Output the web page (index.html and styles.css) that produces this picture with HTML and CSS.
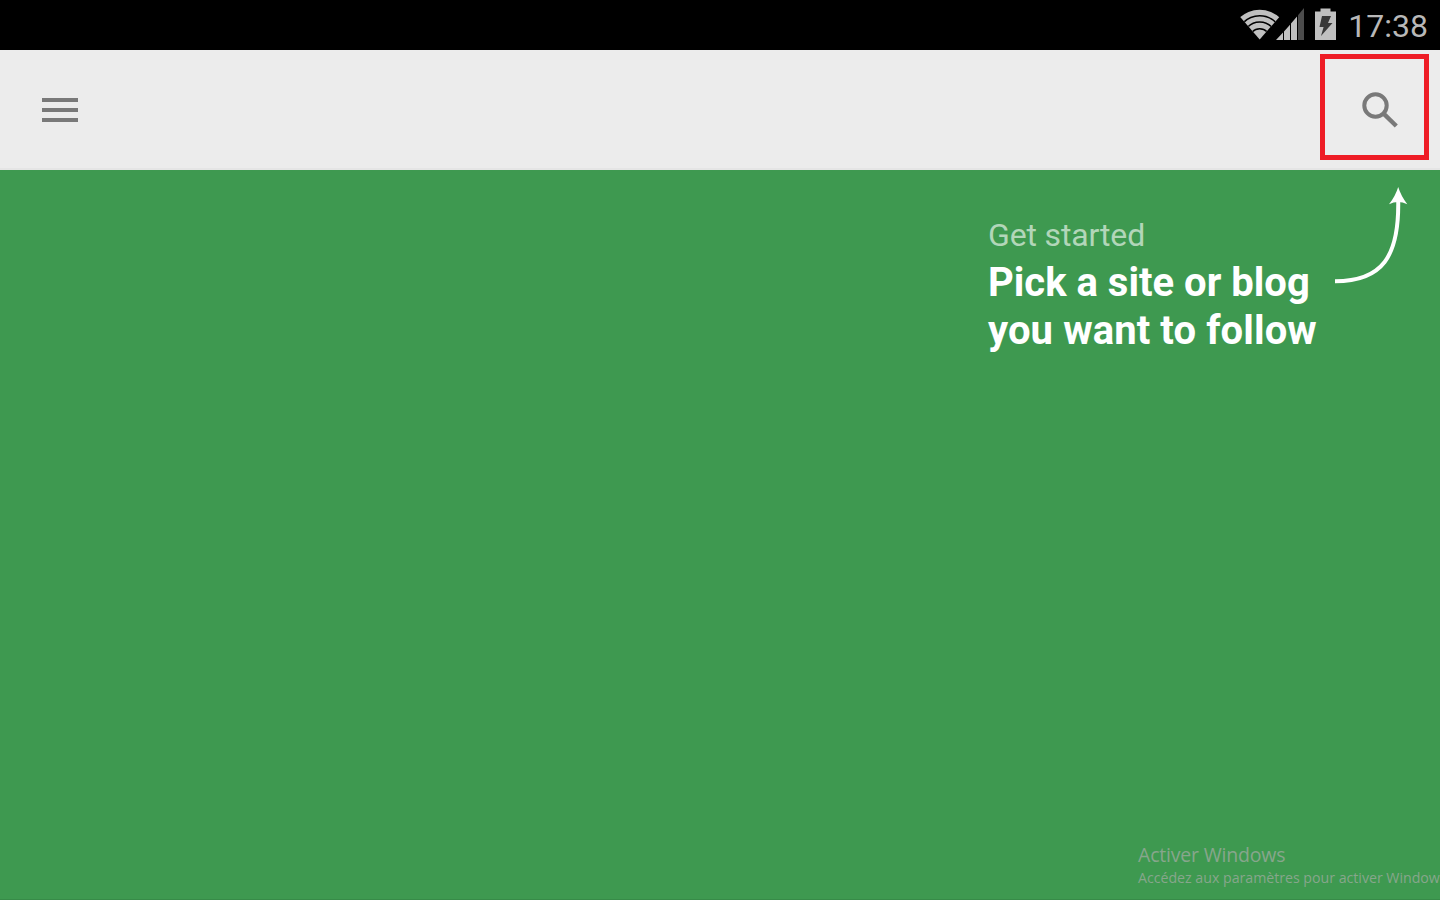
FILE: index.html
```html
<!DOCTYPE html>
<html lang="en">
<head>
<meta charset="utf-8">
<title>Get started</title>
<link rel="stylesheet" href="styles.css">
</head>
<body>
<div class="screen">
  <div class="status-bar">
    <svg class="status-icons" viewBox="1240 0 96 50">
      <defs><clipPath id="fan"><path d="M1259.7 39.500 L1237 13.4 L1237 5 H1283 L1282.4 13.4 Z"/></clipPath></defs>
      <g clip-path="url(#fan)">
        <circle cx="1259.7" cy="39" r="29.3" fill="#c0c0c0"/>
        <g fill="none" stroke="#000" stroke-width="1.5">
          <circle cx="1259.7" cy="39" r="23.2"/>
          <circle cx="1259.7" cy="39" r="17"/>
          <circle cx="1259.7" cy="39" r="10.3"/>
        </g>
      </g>
      <path fill="#c0c0c0" d="M1276 40 L1283 32.6 V40Z M1284 31.4 L1290 24.8 V40 H1284Z M1291 23.6 L1297 16.6 V40 H1291Z"/>
      <path fill="#4c4c4c" d="M1298 15.3 L1304 8 V40 H1298Z"/>
      <path fill="#c0c0c0" d="M1320.500 8.500 H1330.500 V11.500 H1336 V40 H1315 V11.500 H1320.500Z"/>
      <path fill="#383838" d="M1322 16 H1331 L1328 23 H1332.5 L1321 36 L1323.6 27 H1319.5Z"/>
    </svg>
    <span class="clock">17:38</span>
  </div>
  <header class="app-bar">
    <svg class="menu-icon" viewBox="0 0 36 24" fill="#797979"><path d="M0 0H36V4H0Z M0 10H36V14H0Z M0 20H36V24H0Z"/></svg>
    <div class="search">
      <svg class="search-icon" viewBox="1360 90 40 40" fill="none" stroke="#797979">
        <circle cx="1375.5" cy="105.5" r="11.2" stroke-width="4"/>
        <path d="M1383.6 113.7 L1396.300 126" stroke-width="4.4"/>
      </svg>
    </div>
  </header>
  <main class="content">
    <section class="intro">
      <div class="intro-text">
        <p class="kicker">Get started</p>
        <h1 class="title"><span class="line first">Pick a site or blog</span><span class="line second">you want to follow</span></h1>
      </div>
      <svg class="arrow" viewBox="1332 184 80 104">
        <path fill="none" stroke="#fff" stroke-width="4" d="M1335 281.3 C1382 281 1399.300 257 1398.2 200"/>
        <path fill="#fff" d="M1398.2 187 Q1401 196 1407.3 204.2 Q1398 200 1389 204.2 Q1395.500 196 1398.200 187Z"/>
      </svg>
    </section>
    <footer class="activation">
      <p class="activation-title">Activer Windows</p>
      <p class="activation-note">Accédez aux paramètres pour activer Window</p>
    </footer>
  </main>
</div>
</body>
</html>
```
FILE: styles.css
```css
* { box-sizing: border-box; }
body, p, h1 { margin: 0; }
svg { display: block; flex: none; }
.screen {
  width: 1440px;
  height: 900px;
  display: flex;
  flex-direction: column;
  overflow: hidden;
  background: #3e9950;
  font-family: Roboto, sans-serif;
}
.status-bar {
  height: 50px;
  flex: none;
  display: flex;
  justify-content: flex-end;
  padding-right: 12px;
  background: #000;
}
.status-icons { width: 96px; height: 50px; }
.clock {
  width: 92px;
  text-align: right;
  font-size: 32px;
  line-height: 52px;
  font-weight: 400;
  color: #b8b8b8;
}
.app-bar {
  height: 120px;
  flex: none;
  display: flex;
  justify-content: space-between;
  padding: 4px 11px 0 42px;
  background: #ececec;
  border-bottom: 2px solid #e5e5e5;
}
.menu-icon { width: 36px; height: 24px; margin-top: 44px; }
.search {
  width: 109px;
  height: 106px;
  border: 5px solid #ee1c25;
  padding: 31px 0 0 35px;
}
.search-icon { width: 40px; height: 40px; }
.content {
  flex: 1;
  display: flex;
  flex-direction: column;
  justify-content: space-between;
  border-bottom: 1px solid #378b48;
}
.intro {
  display: flex;
  justify-content: space-between;
  padding: 14px 28px 0 988px;
}
.intro-text { padding-top: 32px; white-space: nowrap; color: #fff; }
.kicker { font-size: 32px; line-height: 38px; letter-spacing: -0.15px; color: #b2d6b9; }
.title { margin-top: 5px; font-size: 40px; line-height: 48px; font-weight: 700; }
.line { display: block; }
.second { letter-spacing: 0.1px; }
.arrow { width: 80px; height: 104px; }
.activation {
  padding: 0 0 10px 1138px;
  white-space: nowrap;
  font-family: "Open Sans", sans-serif;
  color: #87a68c;
}
.activation-title { font-size: 19.5px; line-height: 24px; letter-spacing: -0.2px; }
.activation-note { font-size: 14.2px; line-height: 22px; letter-spacing: -0.02px; }
```
